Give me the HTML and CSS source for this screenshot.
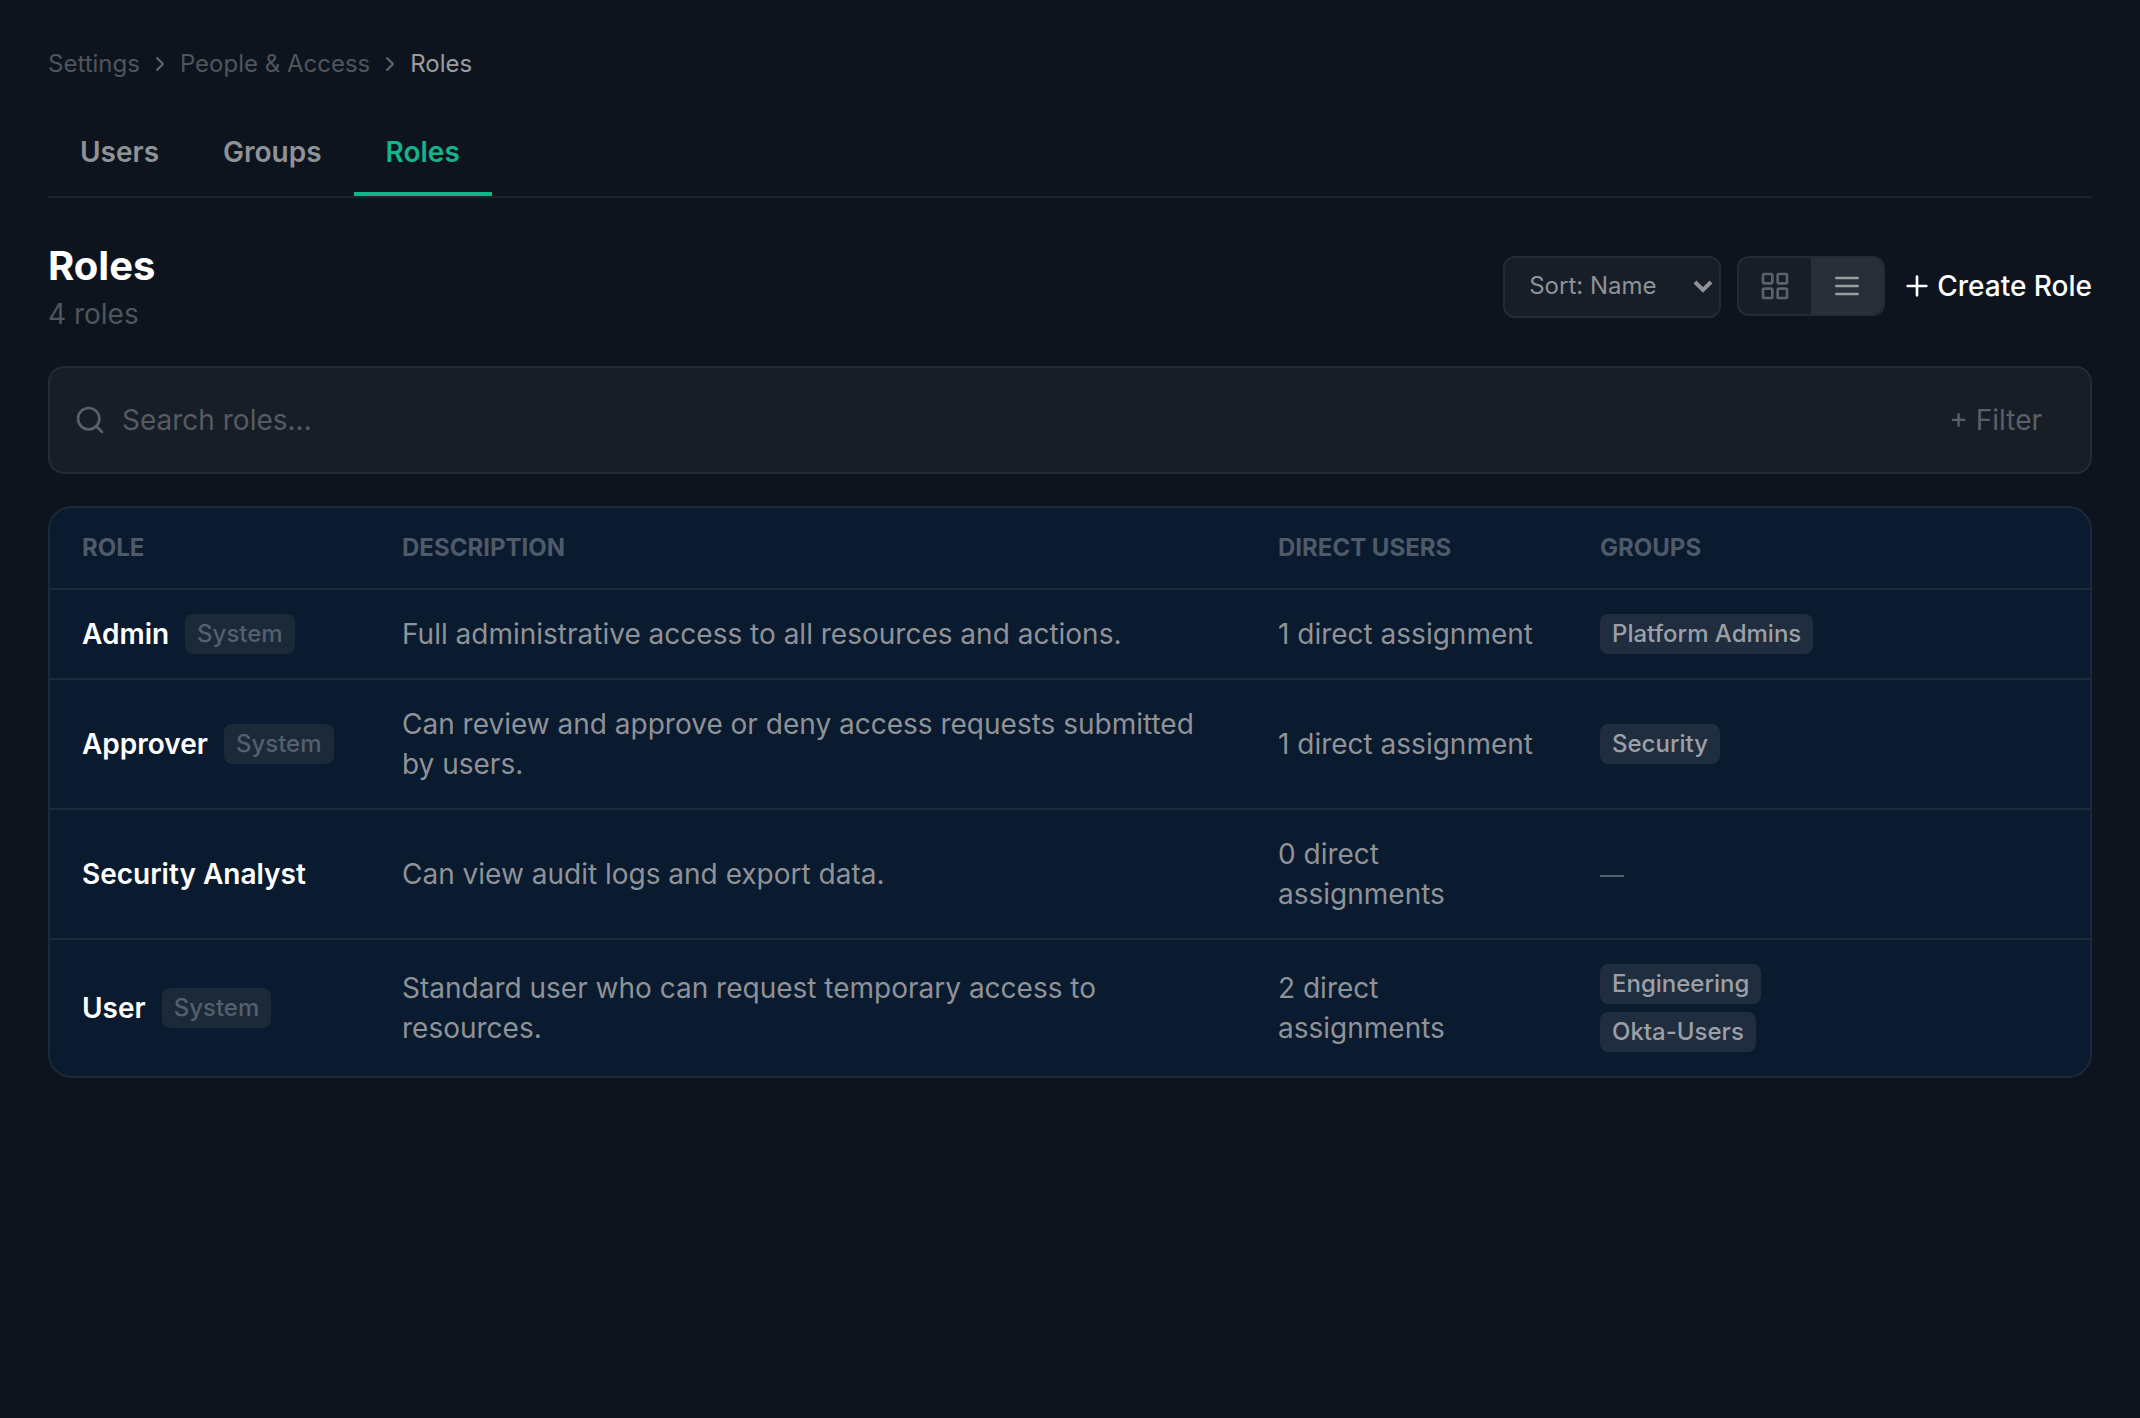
FILE: index.html
```html
<!DOCTYPE html>
<html lang="en">
<head>
    <meta charset="UTF-8">
    <meta name="viewport" content="width=device-width, initial-scale=1.0">
    <title>Roles</title>
    <link rel="stylesheet" href="styles.css">
</head>
<body>

    <nav class="breadcrumb" aria-label="Breadcrumb">
        <a href="#">Settings</a>
        <svg class="chevron" viewBox="0 0 24 24"><path d="m9 18 6-6-6-6"/></svg>
        <a href="#">People &amp; Access</a>
        <svg class="chevron" viewBox="0 0 24 24"><path d="m9 18 6-6-6-6"/></svg>
        <span class="current">Roles</span>
    </nav>

    <nav class="tabs">
        <a href="#">Users</a>
        <a href="#">Groups</a>
        <a href="#" class="active">Roles</a>
    </nav>

    <!-- Title and toolbar -->
    <header class="page-header">
        <div>
            <h1>Roles</h1>
            <p class="count">4 roles</p>
        </div>
        <div class="toolbar">
            <div class="sort">
                <select aria-label="Sort roles">
                    <option>Sort: Name</option>
                    <option>Sort: Users</option>
                </select>
                <svg viewBox="0 0 20 14"><path d="m2 2 8 8 8-8"/></svg>
            </div>
            <div class="view-toggle">
                <button type="button" aria-label="Grid view">
                    <svg class="icon" viewBox="0 0 24 24">
                        <rect x="3" y="3" width="7" height="7" rx="1"/>
                        <rect x="14" y="3" width="7" height="7" rx="1"/>
                        <rect x="14" y="14" width="7" height="7" rx="1"/>
                        <rect x="3" y="14" width="7" height="7" rx="1"/>
                    </svg>
                </button>
                <button type="button" class="active" aria-label="List view">
                    <svg class="icon" viewBox="0 0 24 24"><path d="M4 6h16M4 12h16M4 18h16"/></svg>
                </button>
            </div>
            <button type="button" class="create">
                <svg class="icon" viewBox="0 0 24 24"><path d="M5 12h14M12 5v14"/></svg>
                Create Role
            </button>
        </div>
    </header>

    <!-- Search bar -->
    <div class="search">
        <svg class="icon" viewBox="0 0 24 24"><circle cx="11" cy="11" r="8"/><path d="m21 21-4.3-4.3"/></svg>
        <input type="text" placeholder="Search roles..." aria-label="Search roles">
        <button type="button">+ Filter</button>
    </div>

    <div class="table-card">
        <table>
            <colgroup>
                <col class="col-role">
                <col>
                <col class="col-users">
                <col class="col-groups">
                <col class="col-actions">
            </colgroup>
            <thead>
                <tr>
                    <th>Role</th>
                    <th>Description</th>
                    <th>Direct Users</th>
                    <th>Groups</th>
                    <th></th>
                </tr>
            </thead>
            <tbody>
                <tr>
                    <td><div class="role">Admin <span class="badge">System</span></div></td>
                    <td>Full administrative access to all resources and actions.</td>
                    <td>1 direct assignment</td>
                    <td><div class="chips"><span class="chip">Platform Admins</span></div></td>
                    <td></td>
                </tr>
                <tr>
                    <td><div class="role">Approver <span class="badge">System</span></div></td>
                    <td>Can review and approve or deny access requests submitted by users.</td>
                    <td>1 direct assignment</td>
                    <td><div class="chips"><span class="chip">Security</span></div></td>
                    <td></td>
                </tr>
                <tr>
                    <td><div class="role">Security Analyst</div></td>
                    <td>Can view audit logs and export data.</td>
                    <td>0 direct assignments</td>
                    <td><span class="none">—</span></td>
                    <td></td>
                </tr>
                <tr>
                    <td><div class="role">User <span class="badge">System</span></div></td>
                    <td>Standard user who can request temporary access to resources.</td>
                    <td>2 direct assignments</td>
                    <td><div class="chips"><span class="chip">Engineering</span><span class="chip">Okta-Users</span></div></td>
                    <td></td>
                </tr>
            </tbody>
        </table>
    </div>

</body>
</html>
```
FILE: styles.css
```css
* {
    box-sizing: border-box;
}
body {
    margin: 0;
    padding: 48px;
    background-color: #0d141e;
    color: #8f9297;
    font-family: Inter, sans-serif;
    font-size: 28px;
    line-height: 40px;
}
a {
    color: inherit;
    text-decoration: none;
}
button, input, select {
    font: inherit;
    color: inherit;
    background: none;
    border: none;
    padding: 0;
    margin: 0;
}
button {
    cursor: pointer;
}
svg {
    display: block;
    flex: none;
    fill: none;
    stroke: currentColor;
    stroke-width: 2;
    stroke-linecap: round;
    stroke-linejoin: round;
}
.icon {
    width: 32px;
    height: 32px;
}
.breadcrumb {
    display: flex;
    align-items: center;
    gap: 8px;
    font-size: 24px;
    line-height: 32px;
    color: #50555c;
}
.breadcrumb .current {
    color: #9b9da1;
}
.chevron {
    width: 24px;
    height: 24px;
    color: #64686e;
}
.tabs {
    display: flex;
    margin-top: 32px;
    margin-bottom: 40px;
    border-bottom: 2px solid #1c232c;
    font-weight: 600;
}
.tabs a {
    padding: 20px 32px;
    border-bottom: 4px solid transparent;
}
.tabs .active {
    color: #14b389;
    border-bottom-color: #14b389;
}
.page-header {
    display: flex;
    justify-content: space-between;
    align-items: flex-start;
    margin-bottom: 32px;
}
h1 {
    margin: 0;
    color: #fff;
    font-size: 40px;
    line-height: 56px;
    font-weight: 700;
}
.count {
    margin: 0;
    color: #50555c;
}
.toolbar {
    display: flex;
    align-items: flex-start;
    gap: 16px;
    padding-top: 18px;
}
.sort {
    position: relative;
}
.sort select {
    appearance: none;
    display: block;
    width: 218px;
    height: 62px;
    padding: 0 24px;
    padding-bottom: 2px;
    background-color: #171e27;
    border: 2px solid #242b34;
    border-radius: 12px;
    font-size: 24px;
}
/* arrow drawn over the select */
.sort svg {
    position: absolute;
    right: 8px;
    top: 24px;
    width: 20px;
    height: 14px;
    stroke-width: 4;
    stroke-linecap: butt;
    stroke-linejoin: miter;
    pointer-events: none;
}
.view-toggle {
    display: flex;
    border: 2px solid #242b34;
    border-radius: 12px;
    overflow: hidden;
    background-color: #171e27;
}
.view-toggle button {
    padding: 12px 20px;
    color: #5d6268;
}
.view-toggle .active {
    background-color: #292f38;
    color: #9b9da1;
}
.create {
    display: flex;
    align-items: center;
    gap: 4px;
    height: 60px;
    color: #fff;
    font-weight: 500;
}
.search {
    display: flex;
    align-items: center;
    gap: 16px;
    padding: 32px 24px;
    margin-bottom: 32px;
    background-color: #171e27;
    border: 2px solid #242b34;
    border-radius: 16px;
    color: #5b6066;
}
.search input {
    flex: 1;
    min-width: 0;
    height: 40px;
    outline: none;
}
.search input::placeholder {
    color: #555b61;
    opacity: 1;
}
.search button {
    padding: 0 24px;
}
.table-card {
    background-color: #0a1a2f;
    border: 2px solid #1b2a3b;
    border-radius: 24px;
    overflow: hidden;
}
table {
    width: 100%;
    table-layout: fixed;
    border-spacing: 0;
}
.col-role {
    width: 320px;
}
.col-users, .col-groups {
    width: 322px;
}
.col-actions {
    width: 200px;
}
th, td {
    padding: 24px 32px;
    text-align: left;
    vertical-align: middle;
}
th {
    border-bottom: 2px solid #1b2a3b;
    color: #4f5a69;
    font-size: 24px;
    line-height: 32px;
    font-weight: 700;
    text-transform: uppercase;
}
tbody tr:not(:last-child) td {
    border-bottom: 2px solid #1b2a3b;
}
.role {
    display: flex;
    align-items: center;
    gap: 16px;
    color: #fff;
    font-weight: 600;
    white-space: nowrap;
}
.badge, .chip {
    padding: 4px 12px;
    border-radius: 8px;
    font-size: 24px;
    line-height: 32px;
    font-weight: 500;
}
.badge {
    background-color: #1b2939;
    color: #54606d;
}
.chips {
    display: flex;
    flex-wrap: wrap;
    gap: 8px;
}
.chip {
    background-color: #1f2d3e;
    color: #9ba0a8;
}
.none {
    color: #54606d;
    font-size: 24px;
}
```
